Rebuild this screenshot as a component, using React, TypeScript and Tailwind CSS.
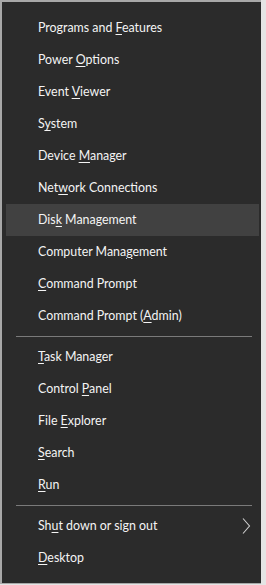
type Item = { label: string; key: number; arrow?: boolean; active?: boolean };

// key = index of the underlined access-key letter
const GROUPS: Item[][] = [
  [
    { label: "Programs and Features", key: 13 },
    { label: "Power Options", key: 6 },
    { label: "Event Viewer", key: 6 },
    { label: "System", key: 1 },
    { label: "Device Manager", key: 7 },
    { label: "Network Connections", key: 3 },
    { label: "Disk Management", key: 3, active: true },
    { label: "Computer Management", key: 13 },
    { label: "Command Prompt", key: 0 },
    { label: "Command Prompt (Admin)", key: 16 },
  ],
  [
    { label: "Task Manager", key: 0 },
    { label: "Control Panel", key: 8 },
    { label: "File Explorer", key: 5 },
    { label: "Search", key: 0 },
    { label: "Run", key: 0 },
  ],
  [
    { label: "Shut down or sign out", key: 2, arrow: true },
    { label: "Desktop", key: 0 },
  ],
];

function Label({ text, k }: { text: string; k: number }) {
  return (
    <span>
      {text.slice(0, k)}
      <span className="underline underline-offset-2">{text[k]}</span>
      {text.slice(k + 1)}
    </span>
  );
}

export default function App() {
  return (
    <div className="h-[585px] w-[266px] bg-[#e4e4e4] font-['Lato',sans-serif]">
      <div className="flex h-[584px] w-[261px] flex-col border-l-2 border-t-2 border-b border-[#a8a8a8] bg-[#2b2b2b] pt-[10px] pl-1 pr-[2px] text-[12.4px] text-[#f4f4f4]">
        {GROUPS.map((group, gi) => (
          <div key={gi}>
            {gi > 0 && (
              <div className="flex h-[9px] items-center pl-[10px] pr-[7px]">
                <div className="h-px w-full bg-[#7a7a7a]" />
              </div>
            )}
            {group.map((item) => (
              <div
                key={item.label}
                className={`flex h-8 items-center pl-[32px] pr-[8px] ${
                  item.active ? "bg-[#414141]" : ""
                }`}
              >
                <Label text={item.label} k={item.key} />
                {item.arrow && (
                  <svg width="10" height="18" viewBox="0 0 10 18" className="ml-auto" fill="none">
                    <path d="M2 1.5 L8.5 9 L2 16.5" stroke="#cfcfcf" strokeWidth="1.1" />
                  </svg>
                )}
              </div>
            ))}
          </div>
        ))}
      </div>
    </div>
  );
}
